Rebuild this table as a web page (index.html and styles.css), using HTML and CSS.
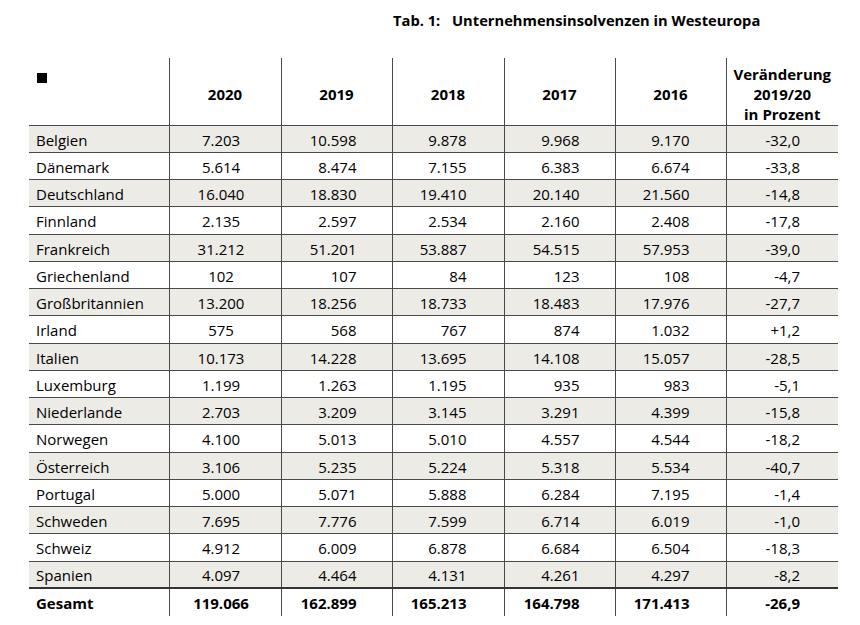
FILE: index.html
```html
<!DOCTYPE html>
<html lang="de">
<head>
<meta charset="utf-8">
<title>Unternehmensinsolvenzen in Westeuropa</title>
<link rel="stylesheet" href="styles.css">
</head>
<body>
<div class="page">
  <h1 class="title"><span class="tab">Tab. 1:</span>Unternehmensinsolvenzen in Westeuropa</h1>
  <table class="data">
    <colgroup>
      <col class="w140"><col class="w112"><col class="w111"><col class="w112"><col class="w111"><col class="w111"><col class="w112">
    </colgroup>
    <thead>
      <tr>
        <th class="corner"><span class="square"></span></th>
        <th>2020</th><th>2019</th><th>2018</th><th>2017</th><th>2016</th>
        <th class="last">Veränderung<br>2019/20<br>in Prozent</th>
      </tr>
    </thead>
    <tbody>
      <tr class="shade"><td>Belgien</td><td>7.203</td><td>10.598</td><td>9.878</td><td>9.968</td><td>9.170</td><td>-32,0</td></tr>
      <tr><td>Dänemark</td><td>5.614</td><td>8.474</td><td>7.155</td><td>6.383</td><td>6.674</td><td>-33,8</td></tr>
      <tr class="shade"><td>Deutschland</td><td>16.040</td><td>18.830</td><td>19.410</td><td>20.140</td><td>21.560</td><td>-14,8</td></tr>
      <tr><td>Finnland</td><td>2.135</td><td>2.597</td><td>2.534</td><td>2.160</td><td>2.408</td><td>-17,8</td></tr>
      <tr class="shade"><td>Frankreich</td><td>31.212</td><td>51.201</td><td>53.887</td><td>54.515</td><td>57.953</td><td>-39,0</td></tr>
      <tr><td>Griechenland</td><td>102</td><td>107</td><td>84</td><td>123</td><td>108</td><td>-4,7</td></tr>
      <tr class="shade"><td>Großbritannien</td><td>13.200</td><td>18.256</td><td>18.733</td><td>18.483</td><td>17.976</td><td>-27,7</td></tr>
      <tr><td>Irland</td><td>575</td><td>568</td><td>767</td><td>874</td><td>1.032</td><td>+1,2</td></tr>
      <tr class="shade"><td>Italien</td><td>10.173</td><td>14.228</td><td>13.695</td><td>14.108</td><td>15.057</td><td>-28,5</td></tr>
      <tr><td>Luxemburg</td><td>1.199</td><td>1.263</td><td>1.195</td><td>935</td><td>983</td><td>-5,1</td></tr>
      <tr class="shade"><td>Niederlande</td><td>2.703</td><td>3.209</td><td>3.145</td><td>3.291</td><td>4.399</td><td>-15,8</td></tr>
      <tr><td>Norwegen</td><td>4.100</td><td>5.013</td><td>5.010</td><td>4.557</td><td>4.544</td><td>-18,2</td></tr>
      <tr class="shade"><td>Österreich</td><td>3.106</td><td>5.235</td><td>5.224</td><td>5.318</td><td>5.534</td><td>-40,7</td></tr>
      <tr><td>Portugal</td><td>5.000</td><td>5.071</td><td>5.888</td><td>6.284</td><td>7.195</td><td>-1,4</td></tr>
      <tr class="shade"><td>Schweden</td><td>7.695</td><td>7.776</td><td>7.599</td><td>6.714</td><td>6.019</td><td>-1,0</td></tr>
      <tr><td>Schweiz</td><td>4.912</td><td>6.009</td><td>6.878</td><td>6.684</td><td>6.504</td><td>-18,3</td></tr>
      <tr class="shade"><td>Spanien</td><td>4.097</td><td>4.464</td><td>4.131</td><td>4.261</td><td>4.297</td><td>-8,2</td></tr>
    </tbody>
    <tfoot>
      <tr class="total"><td>Gesamt</td><td>119.066</td><td>162.899</td><td>165.213</td><td>164.798</td><td>171.413</td><td>-26,9</td></tr>
    </tfoot>
  </table>
</div>
</body>
</html>
```

FILE: styles.css
```css
html, body {
  margin: 0;
  padding: 0;
  background: #ffffff;
}

body {
  font-family: "Open Sans", "Noto Sans", "Liberation Sans", sans-serif;
  color: #000000;
}

.page {
  width: 860px;
  height: 625px;
  padding-top: 10px;
  box-sizing: border-box;
}

.title {
  margin: 0 0 0 393px;
  font-size: 14.7px;
  font-weight: 700;
  line-height: 20px;
  height: 48px;
  white-space: nowrap;
}

.title .tab {
  display: inline-block;
  width: 59px;
}

.data {
  margin-left: 29px;
  width: 809px;
  border-collapse: collapse;
  table-layout: fixed;
  font-size: 15px;
}

.w140 { width: 140px; }
.w112 { width: 112px; }
.w111 { width: 111px; }

.data th,
.data td {
  padding: 0;
  border-left: 1px solid #4a4a4a;
}

.data th:first-child,
.data td:first-child {
  border-left: none;
}

.data thead th {
  height: 67px;
  box-sizing: border-box;
  padding-top: 5px;
  vertical-align: middle;
  text-align: center;
  font-weight: 700;
  line-height: 20px;
}

.data thead th.corner {
  vertical-align: top;
  text-align: left;
  padding: 9px 0 0 8px;
}

.square {
  display: inline-block;
  width: 10px;
  height: 10px;
  background: #000000;
}

.data tbody td,
.data tfoot td {
  height: 27.25px;
  box-sizing: border-box;
  border-top: 1.5px solid #4a4a4a;
  padding-top: 2px;
  line-height: 20px;
  vertical-align: middle;
  text-align: right;
}

.data tbody tr.shade td {
  background: #ecebe6;
}

.data td:nth-child(1) { text-align: left; padding-left: 7px; }
.data td:nth-child(2) { text-align: center; padding-right: 8px; }
.data td:nth-child(3) { padding-right: 35px; }
.data td:nth-child(4) { padding-right: 37px; }
.data td:nth-child(5) { padding-right: 35px; }
.data td:nth-child(6) { padding-right: 36px; }
.data td:nth-child(7) { padding-right: 38px; }

.data tfoot td {
  border-top: 2px solid #333333;
  font-weight: 700;
  height: 28px;
  padding-top: 0;
}
```
